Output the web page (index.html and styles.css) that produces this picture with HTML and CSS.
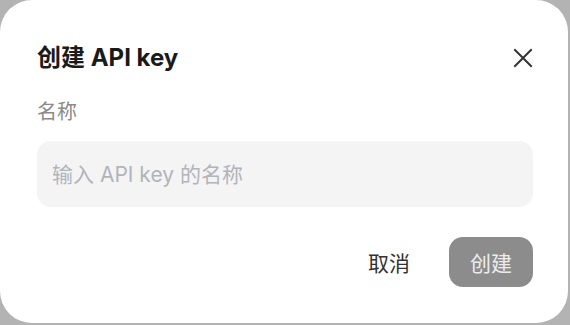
FILE: index.html
```html
<!DOCTYPE html>
<html lang="zh-CN">
<head>
  <meta charset="UTF-8">
  <meta name="viewport" content="width=device-width, initial-scale=1.0">
  <title>创建 API key</title>
  <link rel="stylesheet" href="styles.css">
</head>
<body>
  <div class="overlay">
    <div class="dialog">
      <header class="dialog-header">
        <h1>创建 API key</h1>
        <button class="close-btn" aria-label="关闭">
          <svg width="20" height="20" viewBox="0 0 20 20">
            <path d="M2 2 L18 18 M18 2 L2 18" stroke="#333" stroke-width="2" stroke-linecap="square" fill="none"/>
          </svg>
        </button>
      </header>

      <label class="field-label" for="key-name">名称</label>
      <input type="text" id="key-name" class="name-input" placeholder="输入 API key 的名称">

      <div class="dialog-actions">
        <button class="btn-cancel">取消</button>
        <button class="btn-create" disabled>创建</button>
      </div>
    </div>
  </div>
</body>
</html>
```

FILE: styles.css
```css
body {
  font-family: Inter, "Noto Sans CJK SC", sans-serif;
  margin: 0;
  background-color: #b3b3b3;
}

.overlay {
  width: 570px;
  height: 325px;
}

.dialog {
  width: 568px;
  height: 323px;
  box-sizing: border-box;
  padding: 43px 35px 0 37px;
  background: white;
  border-radius: 32px;
  display: flex;
  flex-direction: column;
}

.dialog-header {
  display: flex;
  align-items: center;
  justify-content: space-between;
  height: 30px;
}

h1 {
  font-size: 24px;
  line-height: 30px;
  font-weight: 700;
  color: #1a1a1a;
  margin: 0;
}

.close-btn {
  background: none;
  border: none;
  padding: 0;
  width: 20px;
  height: 20px;
  cursor: pointer;
}

.field-label {
  margin-top: 27px;
  font-size: 20px;
  line-height: 24px;
  color: #8a8a8a;
}

.name-input {
  margin-top: 17px;
  height: 66px;
  box-sizing: border-box;
  padding: 0 15px;
  border: none;
  border-radius: 14px;
  background: #f4f4f5;
  font-family: Inter, "Noto Sans CJK SC", sans-serif;
  font-size: 21px;
  color: #333;
  outline: none;
}

.name-input::placeholder {
  color: #b1b4b9;
}

.dialog-actions {
  margin-top: 30px;
  display: flex;
  justify-content: flex-end;
  align-items: center;
  gap: 17px;
}

.dialog-actions button {
  font-family: "Noto Sans CJK SC", sans-serif;
  font-size: 21px;
  height: 50px;
  border: none;
  border-radius: 14px;
  padding: 0 22px;
  white-space: nowrap;
  cursor: pointer;
}

.dialog-actions .btn-cancel {
  background: none;
  color: #333;
}

.dialog-actions .btn-create {
  background: #8c8c8c;
  color: #ececec;
  width: 84px;
  padding: 0;
}
```
